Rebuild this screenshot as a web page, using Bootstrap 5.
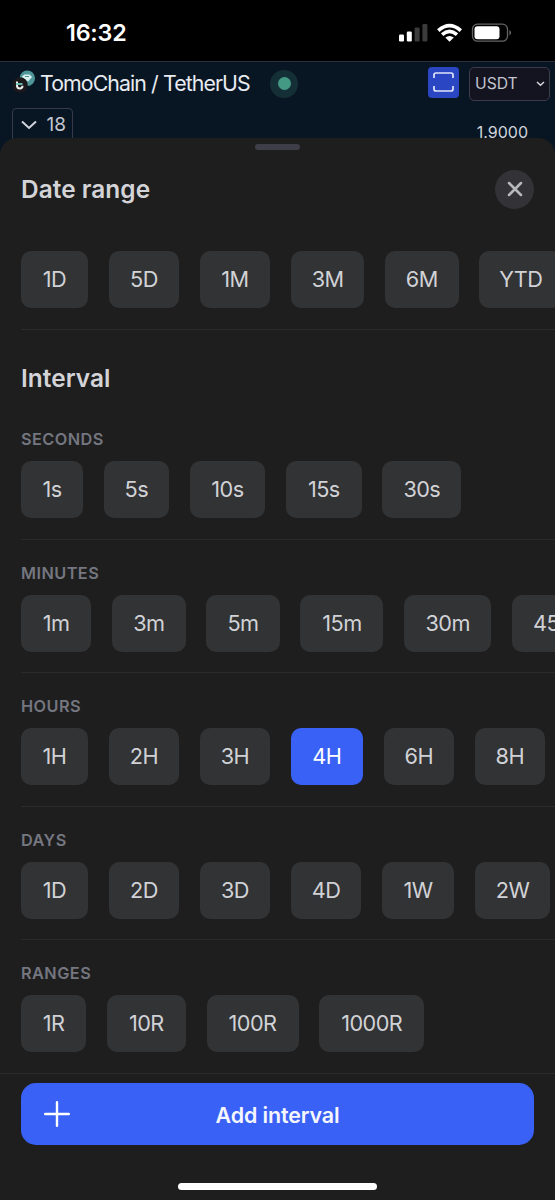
<!DOCTYPE html>
<html lang="en" data-bs-theme="dark">
<head>
<meta charset="utf-8">
<meta name="viewport" content="width=device-width, initial-scale=1">
<title>Date range and interval</title>
<link href="https://cdn.jsdelivr.net/npm/bootstrap@5.3.0/dist/css/bootstrap.min.css" rel="stylesheet">
<style>
body{font-family:Inter,"Liberation Sans",sans-serif;background:#000;color:#d1d2d6;width:555px;height:1200px;overflow:hidden}
.statusbar{height:61px;padding:5px 42px 0 66px}
.clock{font-size:23.3px;font-weight:600;color:#fff;letter-spacing:-.2px;line-height:1}
.chart-top{height:93px;background:#081623;border-top:1px solid #2a2f3a}
.pair{height:43px;padding:0 5px 0 12px}
.pair-name{font-size:21.3px;line-height:1;color:#e8ebf0;letter-spacing:-.9px;margin-left:4px;width:230px}
.pair-logo{margin-top:-5px}
.live{width:28px;height:28px;background:#142f35}
.live i{width:13px;height:13px;background:#449984}
.scan{width:31px;height:31px;border-radius:4px;background:#2a46c2;margin-top:-3px}
.currency{width:81px;height:34px;border:1px solid #3c3c4b;border-radius:5px;background:#131420;font-size:15.7px;color:#c2c5ce;padding:0 4px 0 5px;margin-left:10px}
.count{width:61.5px;height:42px;margin:3px 0 0 11.5px;border:1px solid #363b49;border-radius:4px;font-size:19px;line-height:1;color:#c3c6ce;padding:6px 6px 0 8px}
.count svg{margin-top:5px}
.price{font-size:16px;line-height:1;color:#d2d4da;margin:19px 27px 0 0}
.sheet{height:1062px;margin-top:-16px;background:#1e1e1e;border-radius:17px 17px 0 0}
.grip{width:45px;height:6px;border-radius:3px;background:#3e3e49;margin-top:6px}
.sheet-head{height:68px;margin-top:5px;padding:0 21px}
.sheet-title{font-size:24.4px;font-weight:600;line-height:1;letter-spacing:.05px;color:#d4d4d8}
.close-btn{width:39px;height:39px;background:#333337;border:0;color:#b7b8bd}
.section{margin-left:21px;border-bottom:1px solid #2b2b2f}
.date-range{height:106.5px;padding-top:28px}
.interval-title{margin:36px 0 0 21px;height:24px}
.group{height:133.45px}
.first-group{margin-top:17px}
.group-name{font-size:16.3px;font-weight:600;line-height:20px;letter-spacing:.45px;color:#747680;padding-top:22.9px;height:54.8px}
.chips{gap:20.7px;height:57px}
.chip{flex:none;border:0;padding:1px 0 0;height:57px;border-radius:10px;background:#323335;color:#d1d2d6;font-size:21.7px;letter-spacing:-.55px;display:flex;align-items:center;justify-content:center;width:70.4px;line-height:1}
.chip.active{background:#3961f5;color:#fff}
.cw-62{width:62px}.cw-65{width:65.2px}.cw-67{width:67px}.cw-72{width:72px}.cw-73{width:73.5px}.cw-76{width:75.7px}.cw-79{width:79px}.cw-83{width:83px}.cw-87{width:87px}.cw-92{width:92px}.cw-105{width:105px}
.last-group{margin-left:0;padding-left:21px}
.add-btn{height:62px;border:0;border-radius:15px;background:#3961f5;color:#f5f6fc;font-size:21.4px;font-weight:600;letter-spacing:-.1px;margin:9.500px 21px 0;width:513px;padding-top:2px}
.add-btn svg{left:23px;top:18px}
.home{width:199px;height:7px;border-radius:4px;background:#fff;margin-top:37.5px}
</style>
</head>
<body>
<div class="statusbar d-flex align-items-center justify-content-between">
  <span class="clock">16:32</span>
  <svg width="114" height="20" viewBox="0 0 114 20">
    <g fill="#fff"><rect x="0" y="11.5" width="5" height="7" rx="1.3"/><rect x="7.8" y="8.5" width="5" height="10" rx="1.3"/></g>
    <g fill="#3b3b3b"><rect x="15.6" y="4.5" width="5" height="14" rx="1.3"/><rect x="23.4" y="1" width="5" height="17.5" rx="1.3"/></g>
    <g fill="none" stroke="#fff" stroke-width="3.6"><path d="M39.3 7.6Q50.5-2.4 61.8 7.6"/><path d="M43.1 11.6Q50.5 5.2 58 11.6"/></g>
    <path d="M46.3 14.6Q50.5 11.3 54.8 14.6L50.5 18.7z" fill="#fff"/>
    <rect x="73.5" y="1.2" width="35" height="17" rx="5" fill="none" stroke="#646464" stroke-width="1.3"/>
    <rect x="75.5" y="3.2" width="25" height="13" rx="3" fill="#fff"/>
    <path d="M110.5 7q3 2.7 0 5.5z" fill="#777"/>
  </svg>
</div>
<div class="chart-top">
  <div class="pair d-flex align-items-center">
    <svg class="pair-logo" width="24" height="24" viewBox="0 0 24 24">
      <circle cx="15.3" cy="9.3" r="7.7" fill="#50979a"/>
      <path d="M9.500 8L12.500 5.500H17.500L20 8L16 12.500z" fill="#d8efed"/><path d="M13 7.500h4" stroke="#50979a"/>
      <circle cx="8" cy="16" r="7.800" fill="#1b191c"/>
      <path d="M5 12.500V16.500q0 3 2.800 3 2.700 0 2.700-2.800" fill="none" stroke="#eee" stroke-width="2"/><path d="M4 15h6.500" stroke="#6fc4b7" stroke-width="1.800"/>
    </svg>
    <span class="pair-name">TomoChain / TetherUS</span>
    <span class="live rounded-circle d-flex align-items-center justify-content-center"><i class="rounded-circle"></i></span>
    <span class="scan ms-auto d-flex align-items-center justify-content-center">
      <svg width="21" height="20" viewBox="0 0 21 20" fill="none" stroke="#dfe5fb" stroke-width="1.7"><path d="M1 6V3Q1 1 3 1H18Q20 1 20 3V6M1 14V17Q1 19 3 19H18Q20 19 20 17V14"/></svg>
    </span>
    <span class="currency d-flex align-items-center justify-content-between">USDT
      <svg width="9" height="6" viewBox="0 0 9 6" fill="none" stroke="#d5d6dd" stroke-width="1.5"><path d="M1 1l3.500 3.300L8 1"/></svg>
    </span>
  </div>
  <div class="d-flex justify-content-between">
    <div class="count d-flex justify-content-between">
      <svg width="16" height="10" viewBox="0 0 16 10" fill="none" stroke="#d1d4dc" stroke-width="2"><path d="M1 1.500l7 6.500 7-6.500"/></svg><span>18</span>
    </div>
    <span class="price">1.9000</span>
  </div>
</div>
<main class="sheet position-relative overflow-hidden">
  <div class="grip mx-auto"></div>
  <div class="sheet-head d-flex justify-content-between align-items-center">
    <h1 class="sheet-title m-0">Date range</h1>
    <button class="close-btn rounded-circle d-flex align-items-center justify-content-center p-0" aria-label="Close">
      <svg width="16" height="16" viewBox="0 0 16 16" fill="none" stroke="currentColor" stroke-width="2.5" stroke-linecap="round"><path d="M2 2l12 12M14 2L2 14"/></svg>
    </button>
  </div>
  <section class="section date-range">
    <div class="chips d-flex">
      <button class="chip cw-67">1D</button><button class="chip">5D</button><button class="chip">1M</button><button class="chip cw-73">3M</button><button class="chip cw-73">6M</button><button class="chip cw-83">YTD</button>
    </div>
  </section>
  <h2 class="sheet-title interval-title">Interval</h2>
  <section class="section group first-group">
    <div class="group-name">SECONDS</div>
    <div class="chips d-flex">
      <button class="chip cw-62">1s</button><button class="chip cw-65">5s</button><button class="chip cw-76">10s</button><button class="chip cw-76">15s</button><button class="chip cw-79">30s</button>
    </div>
  </section>
  <section class="section group">
    <div class="group-name">MINUTES</div>
    <div class="chips d-flex">
      <button class="chip">1m</button><button class="chip cw-73">3m</button><button class="chip cw-73">5m</button><button class="chip cw-83">15m</button><button class="chip cw-87">30m</button><button class="chip cw-87">45m</button>
    </div>
  </section>
  <section class="section group">
    <div class="group-name">HOURS</div>
    <div class="chips d-flex">
      <button class="chip cw-67">1H</button><button class="chip">2H</button><button class="chip">3H</button><button class="chip active cw-72">4H</button><button class="chip">6H</button><button class="chip">8H</button>
    </div>
  </section>
  <section class="section group">
    <div class="group-name">DAYS</div>
    <div class="chips d-flex">
      <button class="chip cw-67">1D</button><button class="chip">2D</button><button class="chip">3D</button><button class="chip">4D</button><button class="chip cw-72">1W</button><button class="chip cw-76">2W</button>
    </div>
  </section>
  <section class="section group last-group">
    <div class="group-name">RANGES</div>
    <div class="chips d-flex">
      <button class="chip cw-65">1R</button><button class="chip cw-79">10R</button><button class="chip cw-92">100R</button><button class="chip cw-105">1000R</button>
    </div>
  </section>
  <button class="add-btn position-relative d-flex align-items-center justify-content-center">
    <svg class="position-absolute" width="26" height="26" viewBox="0 0 26 26" stroke="#fff" stroke-width="2.4" stroke-linecap="round"><path d="M13 1.200v23.600M1.200 13h23.600"/></svg>
    Add interval
  </button>
  <div class="home mx-auto"></div>
</main>
<script src="https://cdn.jsdelivr.net/npm/bootstrap@5.3.0/dist/js/bootstrap.bundle.min.js"></script>
</body>
</html>
